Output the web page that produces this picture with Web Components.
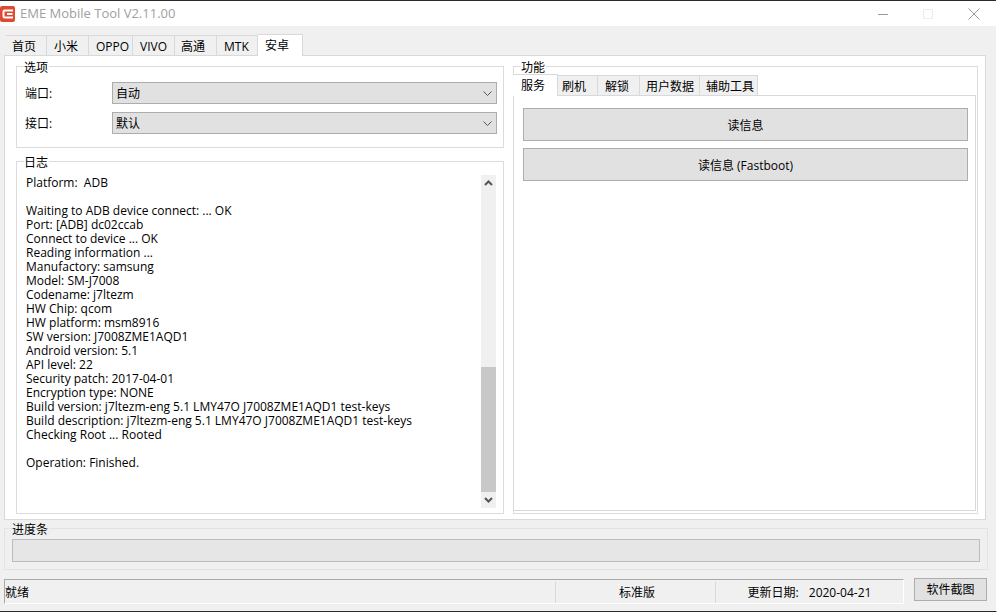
<!DOCTYPE html>
<html lang="zh">
<head>
<meta charset="utf-8">
<title>EME Mobile Tool</title>
<style>
  html, body { margin: 0; padding: 0; background: #f0f0f0; }
  body {
    width: 997px;
    height: 612px;
    overflow: hidden;
    font: 12px "Open Sans", "Noto Sans CJK SC", sans-serif;
    color: #000;
  }
</style>
</head>
<body>
<eme-window></eme-window>

<script>
class EmeTitlebar extends HTMLElement {
  connectedCallback () {
    this.attachShadow({ mode: 'open' }).innerHTML = /*html*/`
    <style>
      :host { display: flex; align-items: center; height: 25px; flex: none; background: #fff; border-top: 1px solid #2a2a2a; }
      .logo { width: 15px; height: 16px; flex: none; }
      .name { margin-left: 5px; font-size: 13px; color: #a0a0a0; flex: 1; padding-bottom: 2px; }
      svg.ctl { width: 12px; height: 12px; flex: none; }
    </style>
    <svg class="logo" viewBox="0 0 15 16"><rect width="15" height="16" rx="2" fill="#dd4a30"/><path d="M13 4.5H4.5a1 1 0 0 0-1 1v5a1 1 0 0 0 1 1H13" fill="none" stroke="#fff" stroke-width="2"/><path d="M7 8h5.5" fill="none" stroke="#fff" stroke-width="2"/></svg>
    <span class="name">EME Mobile Tool V2.11.00</span>
    <svg class="ctl" style="margin-right:33px" viewBox="0 0 12 12"><path d="M1 6.5h10" stroke="#999" fill="none"/></svg>
    <svg class="ctl" style="margin-right:34px" viewBox="0 0 12 12"><rect x="1.5" y="1.5" width="9" height="9" fill="none" stroke="#ececec"/></svg>
    <svg class="ctl" style="margin-right:16px" viewBox="0 0 12 12"><path d="M.5.5l11 11M11.5.5l-11 11" stroke="#999" fill="none"/></svg>`
  }
}

// row of tabs, the selected one is a bit taller and sits over the panel's border
class EmeTabs extends HTMLElement {
  connectedCallback () {
    const active = +this.getAttribute('active')
    const tabs = JSON.parse(this.getAttribute('tabs'))
    this.attachShadow({ mode: 'open' }).innerHTML = /*html*/`
    <style>
      :host { display: flex; align-items: flex-end; height: 22px; flex: none; position: relative; z-index: 1; }
      div {
        box-sizing: border-box;
        height: 20px;
        margin-bottom: 1px;
        background: #f0f0f0;
        border: 1px solid #d9d9d9;
        border-left-width: 0;
        border-bottom: 0;
        padding-top: 2px;
        line-height: 17px;
      }
      div:first-child { border-left-width: 1px; }
      div.on {
        height: 22px;
        margin-bottom: 0;
        background: #fff;
      }
    </style>
    ${tabs.map((t, i) => `<div class="${i === active ? 'on' : ''}" style="width:${t[1]}px;padding-left:${t[2]}px">${t[0]}</div>`).join('')}`
  }
}

class EmeGroup extends HTMLElement {
  connectedCallback () {
    this.attachShadow({ mode: 'open' }).innerHTML = /*html*/`
    <style>
      :host { display: flex; flex-direction: column; box-sizing: border-box; border: 1px solid #dcdcdc; background: var(--group-bg, #fff); }
      .title { display: block; flex: none; width: max-content; margin: -7px 0 0 7px; line-height: 15px; padding: 0 1px 0 0; background: var(--group-bg, #fff); height: 15px; }
      .body { flex: 1; min-height: 0; display: flex; flex-direction: column; gap: var(--group-gap, 0); padding: var(--group-pad, 0); }
    </style>
    <span class="title">${this.getAttribute('label')}</span>
    <div class="body"><slot></slot></div>`
  }
}

class EmeSelect extends HTMLElement {
  connectedCallback () {
    this.attachShadow({ mode: 'open' }).innerHTML = /*html*/`
    <style>
      :host { display: grid; grid-template-columns: 87px 385px; align-items: center; }
      .box {
        box-sizing: border-box; height: 22px; display: flex; align-items: center; justify-content: space-between;
        padding: 0 4px 0 3px; background: #e1e1e1; border: 1px solid #adadad;
      }
      svg { width: 9px; height: 5px; }
    </style>
    <span>${this.getAttribute('label')}</span>
    <div class="box"><slot></slot><svg viewBox="0 0 9 5"><path d="M.5.5l4 4 4-4" fill="none" stroke="#555"/></svg></div>`
  }
}

class EmeButton extends HTMLElement {
  connectedCallback () {
    this.attachShadow({ mode: 'open' }).innerHTML = /*html*/`
    <style>
      :host { display: flex; align-items: center; justify-content: center; box-sizing: border-box; background: #e1e1e1; border: 1px solid #adadad; }
    </style>
    <slot></slot>`
  }
}

class EmeLog extends HTMLElement {
  connectedCallback () {
    this.attachShadow({ mode: 'open' }).innerHTML = /*html*/`
    <style>
      :host { display: flex; justify-content: space-between; padding: 5px 7px 0 9px; }
      pre { margin: 1px 0 0; font: inherit; line-height: 14px; }
      .bar { width: 15px; height: 333px; background: #f0f0f0; display: flex; flex-direction: column; justify-content: flex-end; position: relative; }
      .thumb { height: 125px; background: #c8c8c8; margin-bottom: 16px; }
      svg { position: absolute; left: 3px; width: 9px; height: 6px; }
    </style>
    <pre><slot></slot></pre>
    <div class="bar">
      <svg style="top:5px" viewBox="0 0 9 6"><path d="M1 5l3.5-3.5L8 5" fill="none" stroke="#555" stroke-width="2"/></svg>
      <div class="thumb"></div>
      <svg style="bottom:5px" viewBox="0 0 9 6"><path d="M1 1l3.5 3.5L8 1" fill="none" stroke="#555" stroke-width="2"/></svg>
    </div>`
  }
}

class EmeStatusbar extends HTMLElement {
  connectedCallback () {
    this.attachShadow({ mode: 'open' }).innerHTML = /*html*/`
    <style>
      :host { display: flex; flex: none; height: 32px; padding: 0 9px 0 4px; align-items: flex-start; }
      .bar { display: flex; width: 900px; height: 25px; box-sizing: border-box; border-top: 1px solid #a9a9a9; border-left: 1px solid #a9a9a9; border-bottom: 1px solid #fff; border-right: 1px solid #fff; }
      .bar span { display: flex; align-items: center; border-right: 1px solid #d9d9d9; margin: 2px 0 0; padding-bottom: 1px; }
      .bar span:last-child { border: 0; }
      .a { width: 550px; }
      .b { width: 160px; box-sizing: border-box; padding-left: 3px; justify-content: center; }
      .c { flex: 1; justify-content: center; }
      .c b { font-weight: 400; margin-left: 10px; }
      eme-button { width: 73px; height: 23px; margin: -1px 0 0 10px; padding-bottom: 2px; }
    </style>
    <div class="bar">
      <span class="a">就绪</span>
      <span class="b">标准版</span>
      <span class="c">更新日期:<b>2020-04-21</b></span>
    </div>
    <eme-button>软件截图</eme-button>`
  }
}

class EmeWindow extends HTMLElement {
  connectedCallback () {
    // label, width, left padding
    const top = [['首页', 41, 6], ['小米', 42, 7], ['OPPO', 44, 7], ['VIVO', 42, 7], ['高通', 42, 6], ['MTK', 41, 7], ['安卓', 45, 7]]
    const sub = [['服务', 45, 8], ['刷机', 40, 4], ['解锁', 42, 7], ['用户数据', 60, 6], ['辅助工具', 58, 6]]
    this.attachShadow({ mode: 'open' }).innerHTML = /*html*/`
    <style>
      :host { display: flex; flex-direction: column; height: 612px; box-sizing: border-box; border-bottom: 1px solid #2a2a2a; border-right: 1px solid #fff; }
      .head { padding: 8px 0 0 6px; margin-bottom: -1px; }
      .page {
        flex: none; margin: 0 10px 0 4px; height: 465px; box-sizing: border-box; background: #fff; border: 1px solid #d9d9d9;
        display: flex; padding: 10px 7px 5px 11px; gap: 9px;
      }
      .left { width: 488px; flex: none; display: flex; flex-direction: column; gap: 13px; }
      .right { flex: 1; }
      .opts { height: 82px; flex: none; --group-pad: 7px 0 0 8px; --group-gap: 8px; }
      .logbox { flex: 1; }
      .func { height: 100%; --group-pad: 0 0 2px 0; }
      .func eme-tabs { margin: -1px 0 -1px -1px; }
      .inner { flex: 1; margin: 0 1px 0 -1px; border: 1px solid #d9d9d9; padding: 12px 7px 12px 9px; display: flex; flex-direction: column; gap: 7px; }
      .inner eme-button { height: 33px; flex: none; }
      .progress { flex: none; margin: 8px 8px 0 4px; height: 42px; --group-bg: #f0f0f0; --group-pad: 2px 7px 0; border-color: #e3e3e3; }
      .track { height: 23px; box-sizing: border-box; background: #e6e6e6; border: 1px solid #bcbcbc; }
      eme-statusbar { margin-top: 9px; }
    </style>
    <eme-titlebar></eme-titlebar>
    <eme-tabs class="head" active="6" tabs='${JSON.stringify(top)}'></eme-tabs>
    <div class="page">
      <div class="left">
        <eme-group class="opts" label="选项">
          <eme-select label="端口:">自动</eme-select>
          <eme-select label="接口:">默认</eme-select>
        </eme-group>
        <eme-group class="logbox" label="日志">
          <eme-log>Platform:  ADB

Waiting to ADB device connect: ... OK
Port: [ADB] dc02ccab
Connect to device ... OK
Reading information ...
Manufactory: samsung
Model: SM-J7008
Codename: j7ltezm
HW Chip: qcom
HW platform: msm8916
SW version: J7008ZME1AQD1
Android version: 5.1
API level: 22
Security patch: 2017-04-01
Encryption type: NONE
Build version: j7ltezm-eng 5.1 LMY47O J7008ZME1AQD1 test-keys
Build description: j7ltezm-eng 5.1 LMY47O J7008ZME1AQD1 test-keys
Checking Root ... Rooted

Operation: Finished.</eme-log>
        </eme-group>
      </div>
      <div class="right">
        <eme-group class="func" label="功能">
          <eme-tabs active="0" tabs='${JSON.stringify(sub)}'></eme-tabs>
          <div class="inner">
            <eme-button>读信息</eme-button>
            <eme-button>读信息 (Fastboot)</eme-button>
          </div>
        </eme-group>
      </div>
    </div>
    <eme-group class="progress" label="进度条"><div class="track"></div></eme-group>
    <eme-statusbar></eme-statusbar>`
  }
}

customElements.define('eme-titlebar', EmeTitlebar)
customElements.define('eme-tabs', EmeTabs)
customElements.define('eme-group', EmeGroup)
customElements.define('eme-select', EmeSelect)
customElements.define('eme-button', EmeButton)
customElements.define('eme-log', EmeLog)
customElements.define('eme-statusbar', EmeStatusbar)
customElements.define('eme-window', EmeWindow)
</script>
</body>
</html>
